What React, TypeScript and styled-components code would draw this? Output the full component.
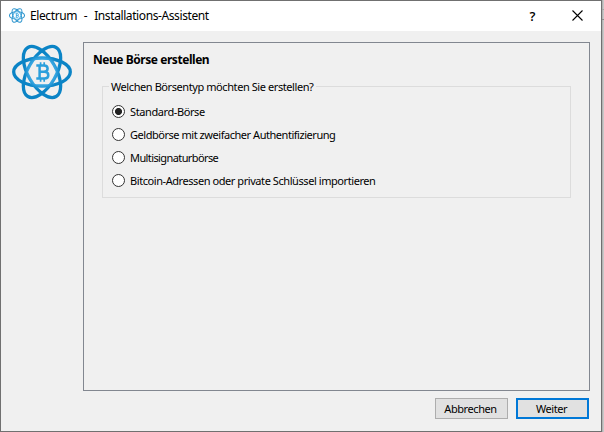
import React from "react";
import styled, { createGlobalStyle } from "styled-components";

const GlobalStyle = createGlobalStyle`
  * { box-sizing: border-box; }
  html, body { margin: 0; overflow: hidden; background: #d3d3d3; }
  body { font-family: "Noto Sans", "Open Sans", sans-serif; font-size: 11px; color: #000; }
`;

const Desktop = styled.div`
  width: 604px;
  height: 432px;
  padding-right: 2px;
  background:
    linear-gradient(#8f8f8f, #8f8f8f) 0 19px / 100% 1px no-repeat,
    linear-gradient(#a8a8a8, #a8a8a8) 0 9px / 100% 1px no-repeat,
    linear-gradient(90deg, #b4b4b4 603px, #c8c8c8 603px);
`;

const Window = styled.main`
  width: 602px;
  height: 432px;
  border: 1px solid #707070;
  background: #f0f0f0;
  display: flex;
  flex-direction: column;
`;

const TitleBar = styled.header`
  height: 30px;
  flex: none;
  padding: 0 18px 0 8px;
  background: #fff;
  display: flex;
  align-items: center;
`;

const Title = styled.h1`
  flex: 1;
  margin: 0 0 0 5px;
  font-size: 12px;
  line-height: 16px;
  font-weight: 400;
  letter-spacing: -0.4px;
  word-spacing: 0.7px;
  white-space: pre;
`;

const CaptionButton = styled.button<{ $gap?: number }>`
  width: 11px;
  height: 20px;
  margin: 0 0 0 ${(p) => p.$gap ?? 0}px;
  padding: 0;
  border: 0;
  background: none;
  color: #000;
  font: 600 13px/20px "Open Sans", sans-serif;
  display: grid;
  place-items: center;
`;

const CloseButton = styled(CaptionButton)`
  height: 22px;
  padding-bottom: 2px;
`;

const Body = styled.div`
  height: 349px;
  margin-top: 11px;
  padding: 0 11px;
  display: flex;
  gap: 11px;
`;

const LogoColumn = styled.aside`
  width: 60px;
  padding-top: 2px;
`;

const Page = styled.section`
  width: 507px;
  height: 349px;
  border: 1px solid #828790;
  padding: 9px 18px 0 9px;
`;

const Heading = styled.h2`
  margin: 0;
  font-size: 12px;
  line-height: 16px;
  font-weight: 700;
  letter-spacing: -0.45px;
  white-space: nowrap;
`;

const Group = styled.fieldset`
  width: 469px;
  height: 119px;
  margin: 11px 0 0 9px;
  padding: 7px 0 0 9px;
  border: 1px solid #dcdcdc;
  min-width: 0;
`;

const Legend = styled.legend`
  height: 14px;
  margin-left: -3px;
  padding: 0 3px 0 2px;
  line-height: 16px;
  letter-spacing: -0.42px;
  white-space: nowrap;
`;

const Option = styled.label`
  height: 23px;
  display: flex;
  align-items: center;
  gap: 5px;
`;

const OptionText = styled.span<{ $spacing: number }>`
  letter-spacing: ${(p) => p.$spacing}px;
  line-height: 15px;
  white-space: nowrap;
`;

const Radio = styled.input`
  appearance: none;
  width: 13px;
  height: 13px;
  margin: 0;
  border: 1px solid #333;
  border-radius: 50%;
  background: #fff;
  &:checked {
    background: radial-gradient(circle, #222 3.1px, #fff 3.9px);
  }
`;

const Actions = styled.footer`
  margin-top: 7px;
  padding-right: 12px;
  display: flex;
  justify-content: flex-end;
  gap: 8px;
`;

const Button = styled.button<{ $primary?: boolean }>`
  width: 73px;
  height: 21px;
  padding: 0 2px 0 0;
  border: ${(p) => (p.$primary ? "2px solid #0078d7" : "1px solid #adadad")};
  background: #e1e1e1;
  color: #000;
  font: inherit;
  letter-spacing: -0.43px;
  line-height: 15px;
`;

const LogoSvg = styled.svg`
  display: block;
  flex: none;
`;

function ElectrumLogo({ size, small = false }: { size: number; small?: boolean }) {
  const gradientId = small ? "orbit-small" : "orbit-large";
  return (
    <LogoSvg width={size} height={size} viewBox="0 0 60 60" fill="none">
      <defs>
        <radialGradient id={gradientId} gradientUnits="userSpaceOnUse" cx="30" cy="28" r="30">
          <stop offset="0.46" stopColor="#35a4e0" />
          <stop offset="0.6" stopColor="#0b84c6" />
        </radialGradient>
      </defs>
      <g stroke={`url(#${gradientId})`} strokeWidth={small ? 3.8 : 3.3} opacity={small ? 0.85 : 1}>
        <ellipse cx="30" cy="28" rx="28.3" ry="14" />
        <ellipse cx="30" cy="28" rx="28.3" ry="14" transform="rotate(60 30 28)" />
        <ellipse cx="30" cy="28" rx="28.3" ry="14" transform="rotate(120 30 28)" />
      </g>
      <g stroke="#2b9fdc" strokeWidth="2.5">
        <path d="M24.3 21.4H32Q35.6 21.4 35.6 24.6Q35.6 27.8 32 27.8H27.4H32.4Q36.3 27.8 36.3 31.2Q36.3 34.6 32.4 34.6H24.3M27.6 21.4V34.6" />
        <path d="M28.6 18.2V21.4M32.2 18.2V21.4M28.6 34.6V37.8M32.2 34.6V37.8" strokeWidth="1.7" />
      </g>
    </LogoSvg>
  );
}

const walletTypes = [
  { label: "Standard-Börse", spacing: -0.4 },
  { label: "Geldbörse mit zweifacher Authentifizierung", spacing: -0.46 },
  { label: "Multisignaturbörse", spacing: -0.6 },
  { label: "Bitcoin-Adressen oder private Schlüssel importieren", spacing: -0.43 },
];

export default function App() {
  return (
    <>
      <GlobalStyle />
      <Desktop>
        <Window>
          <TitleBar>
            <ElectrumLogo size={16} small />
            <Title>{"Electrum  -  Installations-Assistent"}</Title>
            <CaptionButton aria-label="Hilfe">?</CaptionButton>
            <CloseButton aria-label="Schließen" $gap={34}>
              <svg width="11" height="11" viewBox="0 0 11 11">
                <path d="M.5.5 10.5 10.5M10.5.5.5 10.5" stroke="#000" strokeWidth="1.1" />
              </svg>
            </CloseButton>
          </TitleBar>
          <Body>
            <LogoColumn>
              <ElectrumLogo size={60} />
            </LogoColumn>
            <Page>
              <Heading>Neue Börse erstellen</Heading>
              <Group>
                <Legend>Welchen Börsentyp möchten Sie erstellen?</Legend>
                {walletTypes.map((type, i) => (
                  <Option key={type.label}>
                    <Radio type="radio" name="wallet" defaultChecked={i === 0} />
                    <OptionText $spacing={type.spacing}>{type.label}</OptionText>
                  </Option>
                ))}
              </Group>
            </Page>
          </Body>
          <Actions>
            <Button>Abbrechen</Button>
            <Button $primary>Weiter</Button>
          </Actions>
        </Window>
      </Desktop>
    </>
  );
}
